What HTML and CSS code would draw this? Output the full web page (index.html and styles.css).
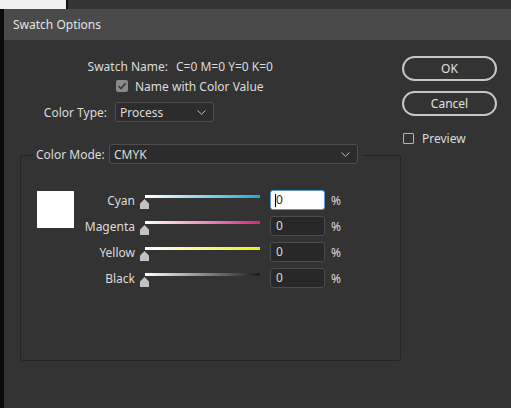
FILE: index.html
```html
<!DOCTYPE html>
<html>
<head>
<meta charset="utf-8">
<link rel="stylesheet" href="styles.css">
</head>
<body>
<div class="top-strip"><div class="ts-white"></div><div class="ts-sep"></div><div class="ts-dark"></div></div>
<div class="stage">
  <div class="leftbar"></div>
  <div class="dialog">
    <div class="titlebar">Swatch Options</div>
    <div class="dbody">
      <div class="main">
        <div class="row row-name">
          <span class="name-label">Swatch Name:</span>
          <span class="name-value">C=0 M=0 Y=0 K=0</span>
        </div>
        <div class="row row-check">
          <span class="cb cb-checked"><svg width="12" height="12" viewBox="0 0 12 12"><path d="M2.5 6.2 L5 8.6 L9.6 3.4" fill="none" stroke="#3a3a3a" stroke-width="1.6"/></svg></span>
          <span class="cb-text">Name with Color Value</span>
        </div>
        <div class="row row-type">
          <span class="type-label">Color Type:</span>
          <div class="select select-type"><span>Process</span><svg class="chev" width="9" height="5" viewBox="0 0 9 5"><path d="M0.5 0.5 L4.5 4.2 L8.5 0.5" fill="none" stroke="#bdbdbd" stroke-width="1"/></svg></div>
        </div>
        <div class="group">
          <div class="group-head">
            <span class="mode-label">Color Mode:</span>
            <div class="select select-mode"><span>CMYK</span><svg class="chev" width="9" height="5" viewBox="0 0 9 5"><path d="M0.5 0.5 L4.5 4.2 L8.5 0.5" fill="none" stroke="#bdbdbd" stroke-width="1"/></svg></div>
          </div>
          <div class="group-content">
            <div class="swatch"></div>
            <div class="sliders">
              <span class="sl-label">Cyan</span>
              <div class="slider"><div class="track tr-cyan"></div><div class="thumb"></div></div>
              <div class="num num-focus"><span class="caret"></span>0</div>
              <span class="pct">%</span>

              <span class="sl-label">Magenta</span>
              <div class="slider"><div class="track tr-magenta"></div><div class="thumb"></div></div>
              <div class="num">0</div>
              <span class="pct">%</span>

              <span class="sl-label">Yellow</span>
              <div class="slider"><div class="track tr-yellow"></div><div class="thumb"></div></div>
              <div class="num">0</div>
              <span class="pct">%</span>

              <span class="sl-label">Black</span>
              <div class="slider"><div class="track tr-black"></div><div class="thumb"></div></div>
              <div class="num">0</div>
              <span class="pct">%</span>
            </div>
          </div>
        </div>
      </div>
      <div class="side">
        <div class="btn">OK</div>
        <div class="btn btn-cancel">Cancel</div>
        <div class="preview"><span class="cb cb-empty"></span><span class="cb-text">Preview</span></div>
      </div>
    </div>
  </div>
</div>
</body>
</html>
```
FILE: styles.css
```css
* { box-sizing: border-box; }
html, body { margin: 0; padding: 0; }
body {
  width: 511px;
  height: 408px;
  overflow: hidden;
  background: #333333;
  font-family: "Noto Sans", "Segoe UI", sans-serif;
  font-size: 12px;
  color: #dcdcdc;
}
.top-strip { display: flex; height: 9px; }
.ts-white { width: 66px; background: #f0f0f0; }
.ts-sep { width: 2px; background: #111111; }
.ts-dark { flex: 1; background: #343434; }

.stage { display: flex; height: 399px; }
.leftbar { width: 4px; background: #0b0b0b; }
.dialog { flex: 1; background: #333333; display: flex; flex-direction: column; }
.titlebar {
  height: 31px;
  line-height: 31px;
  background: #4a4a4a;
  padding-left: 9px;
  color: #e4e4e4;
}
.dbody { display: flex; flex: 1; }
.main { width: 398px; padding-top: 18px; }
.side { width: 95px; padding-top: 16px; display: flex; flex-direction: column; }

.row { display: flex; align-items: center; }
.row-name { height: 16px; }
.name-label { width: 164px; text-align: right; }
.name-value { margin-left: 8px; }
.row-check { height: 16px; margin-top: 4px; padding-left: 112px; }
.cb { width: 12px; height: 12px; display: inline-block; flex: none; }
.cb-checked { background: #8a8a8a; border-radius: 2px; }
.cb-checked svg { display: block; }
.cb-text { margin-left: 7px; }
.row-type { height: 20px; margin-top: 8px; }
.type-label { width: 103px; text-align: right; }

.select {
  height: 20px;
  border: 1px solid #4e4e4e;
  border-radius: 3px;
  background: #2c2c2c;
  display: flex;
  align-items: center;
  justify-content: space-between;
  padding: 0 7px 0 4px;
  color: #dcdcdc;
}
.select-type { width: 99px; margin-left: 8px; }
.select-mode { width: 249px; margin-left: 9px; }
.chev { display: block; }

.group {
  margin-top: 33px;
  margin-left: 16px;
  width: 381px;
  height: 206px;
  border: 1px solid #242424;
  border-radius: 3px;
}
.group-head {
  display: flex;
  align-items: center;
  margin-top: -12px;
  margin-left: 12px;
  background: #333333;
  width: 329px;
  padding: 0 3px 0 3px;
  height: 20px;
}
.mode-label { width: 64px; white-space: nowrap; }
.group-content { display: flex; padding-left: 16px; padding-top: 26px; }
.swatch { width: 37px; height: 37px; background: #ffffff; margin-top: 1px; flex: none; }

.sliders {
  display: grid;
  grid-template-columns: 61px 135px 55px auto;
  grid-auto-rows: 20px;
  row-gap: 6px;
  align-items: center;
}
.sl-label { text-align: right; }
.slider { height: 20px; position: relative; }
.track { position: absolute; left: 10px; top: 5px; width: 115px; height: 3px; }
.tr-cyan { background: linear-gradient(to right, #ffffff, #1caadd); }
.tr-magenta { background: linear-gradient(to right, #ffffff, #d6267a); }
.tr-yellow { background: linear-gradient(to right, #ffffff, #f5ec12); }
.tr-black { background: linear-gradient(to right, #ffffff, #1b1b1b); }
.thumb {
  position: absolute;
  left: 5px;
  top: 9px;
  width: 9px;
  height: 10px;
  background: #c3c3c3;
  clip-path: polygon(50% 0, 100% 45%, 100% 100%, 0 100%, 0 45%);
}
.num {
  width: 55px;
  height: 20px;
  border: 1px solid #4c4c4c;
  border-radius: 3px;
  background: #282828;
  padding-left: 5px;
  line-height: 18px;
  color: #dcdcdc;
}
.num-focus {
  background: #ffffff;
  border: 1px solid #5a9bd8;
  color: #2a2a2a;
  position: relative;
}
.caret {
  position: absolute;
  left: 4px;
  top: 3px;
  width: 1px;
  height: 13px;
  background: #000000;
}
.pct { margin-left: 6px; }

.btn {
  width: 95px;
  height: 25px;
  border: 2px solid #c6c6c6;
  border-radius: 13px;
  text-align: center;
  line-height: 21px;
  color: #e2e2e2;
}
.btn-cancel { margin-top: 10px; }
.preview { display: flex; align-items: center; margin-top: 16px; height: 12px; padding-left: 1px; }
.cb-empty { width: 11px; height: 11px; border: 1px solid #b4b4b4; border-radius: 1px; }
.preview .cb-text { margin-left: 8px; }
```
